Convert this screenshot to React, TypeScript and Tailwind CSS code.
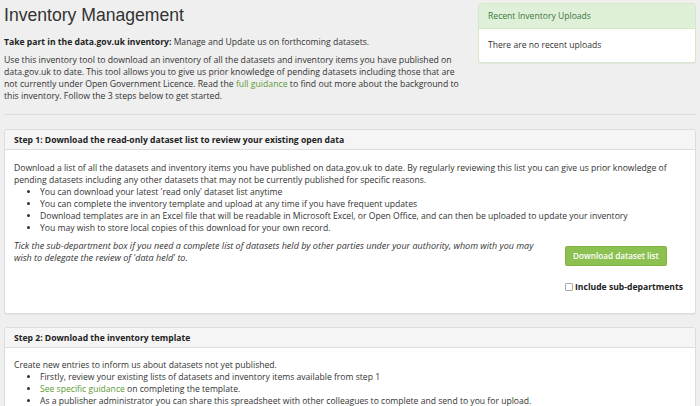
import React from "react";

const link = "text-[#5e9a36]";

function Panel({ title, children }: { title: string; children: React.ReactNode }) {
  return (
    <div className="bg-white border border-[#dddddd] rounded-[3px] shadow-[0_1px_1px_rgba(0,0,0,0.05)]">
      <div className="h-[20px] flex items-center px-[9px] bg-[#f5f5f5] border-b border-[#dddddd] rounded-t-[3px] font-bold text-[#222]">
        {title}
      </div>
      {children}
    </div>
  );
}

export default function App() {
  return (
    <div className="min-h-screen bg-[#efefef] font-['Open_Sans',sans-serif] text-[8.6px] leading-[12px] text-[#333] px-[4px] pb-4">
      {/* Top area */}
      <div className="flex items-start">
        <div className="w-[460px]">
          <h1 className="font-['Liberation_Sans',Arial,sans-serif] text-[17.6px] leading-[22px] text-[#333] pt-[4px]">
            Inventory Management
          </h1>
          <p className="mt-[10px]">
            <span className="font-bold text-[#222]">Take part in the data.gov.uk inventory:</span> Manage and Update us on forthcoming datasets.
          </p>
          <p className="mt-[6px] text-[8.7px]">
            Use this inventory tool to download an inventory of all the datasets and inventory items you have published on data.gov.uk to date. This tool allows you to give us prior knowledge of pending datasets including those that are not currently under Open Government Licence. Read the{" "}
            <a className={link}>full guidance</a> to find out more about the background to this inventory. Follow the 3 steps below to get started.
          </p>
        </div>
        <div className="ml-auto w-[218px] mt-[3px] bg-white border border-[#d6e9c6] rounded-[3px] shadow-[0_1px_1px_rgba(0,0,0,0.05)]">
          <div className="h-[25px] flex items-center px-[9px] bg-[#dff0d8] border-b border-[#d6e9c6] text-[#3c763d]">
            Recent Inventory Uploads
          </div>
          <div className="h-[35px] flex items-center px-[9px] -mt-[2px]">There are no recent uploads</div>
        </div>
      </div>

      <hr className="mt-[12px] border-t border-[#dcdcdc]" />

      {/* Step 1 */}
      <div className="mt-[14px]">
        <Panel title="Step 1: Download the read-only dataset list to review your existing open data">
          <div className="px-[9px] pt-[12px] pb-[20px]">
            <p>
              Download a list of all the datasets and inventory items you have published on data.gov.uk to date. By regularly reviewing this list you can give us prior knowledge of pending datasets including any other datasets that may not be currently published for specific reasons.
            </p>
            <ul className="list-disc pl-[26px]">
              <li>You can download your latest 'read only' dataset list anytime</li>
              <li>You can complete the inventory template and upload at any time if you have frequent updates</li>
              <li>Download templates are in an Excel file that will be readable in Microsoft Excel, or Open Office, and can then be uploaded to update your inventory</li>
              <li>You may wish to store local copies of this download for your own record.</li>
            </ul>
            <div className="flex mt-[6px]">
              <p className="w-[537px] shrink-0 italic text-[9px]">
                Tick the sub-department box if you need a complete list of datasets held by other parties under your authority, whom with you may wish to delegate the review of 'data held' to.
              </p>
              <div className="ml-[14px] pt-[6px]">
                <button className="h-[20px] px-[7px] bg-[#8cc152] border border-[#7fb644] rounded-[2px] text-white text-[8.2px] font-semibold">
                  Download dataset list
                </button>
                <label className="flex items-center gap-[2px] mt-[15px] font-bold text-[#222]">
                  <span className="w-[8px] h-[8px] border border-[#aaa] rounded-[1px] bg-white" />
                  Include sub-departments
                </label>
              </div>
            </div>
          </div>
        </Panel>
      </div>

      {/* Step 2 */}
      <div className="mt-[13px]">
        <Panel title="Step 2: Download the inventory template">
          <div className="px-[9px] pt-[11px] pb-[9px]">
            <p>Create new entries to inform us about datasets not yet published.</p>
            <ul className="list-disc pl-[26px]">
              <li>Firstly, review your existing lists of datasets and inventory items available from step 1</li>
              <li>
                <a className={link}>See specific guidance</a> on completing the template.
              </li>
              <li>As a publisher administrator you can share this spreadsheet with other colleagues to complete and send to you for upload.</li>
            </ul>
          </div>
        </Panel>
      </div>
    </div>
  );
}
